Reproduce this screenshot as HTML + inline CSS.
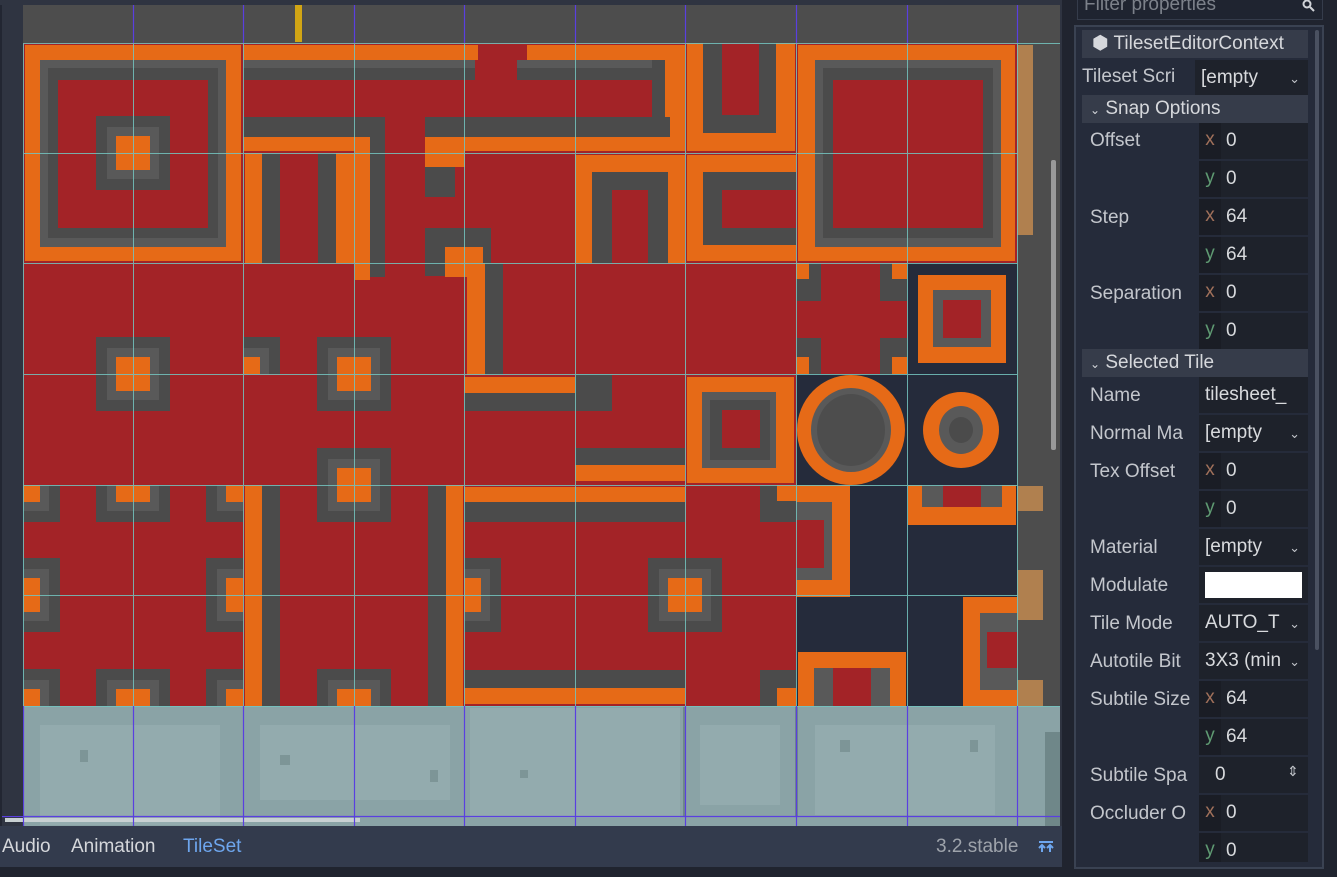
<!DOCTYPE html>
<html><head><meta charset="utf-8"><style>
*{margin:0;padding:0;box-sizing:border-box}
body{width:1337px;height:877px;background:#20242f;overflow:hidden;position:relative;font-family:"Liberation Sans",sans-serif;color:#ccced3}
.a{position:absolute}
.p{font-size:19px;color:#c3c6cc;white-space:nowrap}
.f{position:absolute;background:#1e222b;height:36px;left:1199px;width:109px}
.xy{position:absolute;left:1199px;width:22px;height:36px;background:#1a1d25;font-size:19px;text-align:center;line-height:34px}
.v{position:absolute;font-size:19px;color:#d8dadd;line-height:34px}
.hd{position:absolute;left:1082px;width:226px;background:#363c4a;height:28px;font-size:19px;color:#d6d8dc;line-height:27px}
.dd{position:absolute;right:37px;font-size:13px;color:#c0c3c8}
</style></head><body>
<svg class="a" style="left:0;top:0" width="1062" height="877" viewBox="0 0 1062 877">
<defs>
<g id="k"><rect x="-37" y="-37" width="74" height="74" fill="#4b4b4b"/><rect x="-26" y="-26" width="52" height="52" fill="#595959"/><rect x="-17" y="-17" width="34" height="34" fill="#e66a17"/></g>
</defs>
<rect x="0" y="0" width="1062" height="826" fill="#2f3441"/>
<rect x="23" y="5" width="1037" height="38" fill="#4d4d4d"/>
<rect x="295" y="5" width="7" height="37" fill="#d1a514"/>
<rect x="23" y="43" width="994" height="663" fill="#a32327"/>
<rect x="1017" y="43" width="43" height="663" fill="#4d4d4d"/>
<g fill="#b0804f"><rect x="1017" y="45" width="16" height="190"/><rect x="1017" y="486" width="26" height="25"/><rect x="1017" y="570" width="26" height="50"/><rect x="1017" y="680" width="26" height="26"/></g>
<g fill="#252b3b"><rect x="907" y="263" width="110" height="111"/><rect x="796" y="374" width="221" height="111"/><rect x="850" y="485" width="167" height="221"/><rect x="796" y="595" width="111" height="111"/></g>
<rect x="25" y="45" width="216" height="216" fill="#e66a17"/><rect x="40" y="60" width="186" height="187" fill="#595959"/><rect x="48" y="68" width="170" height="170" fill="#4b4b4b"/><rect x="58" y="80" width="150" height="148" fill="#a32327"/>
<use href="#k" x="133" y="153"/>
<rect x="798" y="45" width="217" height="216" fill="#e66a17"/><rect x="815" y="60" width="186" height="187" fill="#595959"/><rect x="823" y="68" width="170" height="170" fill="#4b4b4b"/><rect x="833" y="80" width="150" height="148" fill="#a32327"/>
<rect x="243" y="45" width="235" height="15" fill="#e66a17"/><rect x="243" y="60" width="255" height="20" fill="#4b4b4b"/><rect x="243" y="60" width="255" height="8" fill="#595959"/>
<rect x="527" y="45" width="158" height="15" fill="#e66a17"/><rect x="517" y="60" width="153" height="20" fill="#4b4b4b"/><rect x="517" y="60" width="153" height="8" fill="#595959"/>
<rect x="665" y="45" width="20" height="106" fill="#e66a17"/><rect x="652" y="60" width="13" height="78" fill="#4b4b4b"/>
<rect x="243" y="117" width="132" height="20" fill="#4b4b4b"/><rect x="243" y="137" width="112" height="14" fill="#e66a17"/>
<rect x="355" y="137" width="15" height="143" fill="#e66a17"/><rect x="370" y="117" width="15" height="160" fill="#4b4b4b"/>
<rect x="425" y="117" width="245" height="20" fill="#4b4b4b"/><rect x="425" y="137" width="260" height="14" fill="#e66a17"/>
<rect x="425" y="137" width="30" height="60" fill="#4b4b4b"/><rect x="425" y="137" width="40" height="30" fill="#e66a17"/>
<rect x="475" y="60" width="40" height="20" fill="#a32327"/>
<rect x="245" y="153" width="17" height="110" fill="#e66a17"/><rect x="262" y="153" width="18" height="110" fill="#4b4b4b"/><rect x="318" y="153" width="18" height="110" fill="#4b4b4b"/><rect x="336" y="153" width="19" height="110" fill="#e66a17"/>
<rect x="425" y="228" width="66" height="48" fill="#4b4b4b"/><rect x="445" y="247" width="38" height="30" fill="#e66a17"/>
<rect x="575" y="155" width="110" height="108" fill="#e66a17"/><rect x="592" y="172" width="76" height="91" fill="#4b4b4b"/><rect x="612" y="190" width="36" height="73" fill="#a32327"/>
<rect x="687" y="155" width="109" height="106" fill="#e66a17"/><rect x="703" y="172" width="93" height="73" fill="#4b4b4b"/><rect x="722" y="190" width="74" height="38" fill="#a32327"/>
<rect x="687" y="43" width="108" height="108" fill="#e66a17"/><rect x="703" y="43" width="73" height="90" fill="#4b4b4b"/><rect x="722" y="43" width="37" height="72" fill="#a32327"/>
<!-- knots -->
<use href="#k" x="133" y="374"/><use href="#k" x="354" y="374"/><use href="#k" x="354" y="485"/>
<svg x="243" y="337" width="37" height="37"><use href="#k" x="0" y="37"/></svg>
<svg x="23" y="485" width="37" height="37"><use href="#k" x="0" y="0"/></svg>
<svg x="96" y="485" width="74" height="37"><use href="#k" x="37" y="0"/></svg>
<svg x="206" y="485" width="37" height="37"><use href="#k" x="37" y="0"/></svg>
<svg x="23" y="558" width="37" height="74"><use href="#k" x="0" y="37"/></svg>
<svg x="206" y="558" width="37" height="74"><use href="#k" x="37" y="37"/></svg>
<svg x="23" y="669" width="37" height="37"><use href="#k" x="0" y="37"/></svg>
<svg x="96" y="669" width="74" height="37"><use href="#k" x="37" y="37"/></svg>
<svg x="206" y="669" width="37" height="37"><use href="#k" x="37" y="37"/></svg>
<svg x="317" y="669" width="74" height="37"><use href="#k" x="37" y="37"/></svg>
<svg x="464" y="558" width="37" height="74"><use href="#k" x="0" y="37"/></svg>
<use href="#k" x="685" y="595"/>
<rect x="467" y="263" width="18" height="112" fill="#e66a17"/><rect x="485" y="263" width="18" height="112" fill="#4b4b4b"/>
<rect x="464" y="377" width="111" height="16" fill="#e66a17"/><rect x="464" y="393" width="111" height="18" fill="#4b4b4b"/><rect x="575" y="374" width="37" height="37" fill="#4b4b4b"/>
<rect x="575" y="448" width="110" height="17" fill="#4b4b4b"/><rect x="575" y="465" width="110" height="16" fill="#e66a17"/>
<rect x="796" y="263" width="111" height="111" fill="#a32327"/>
<g fill="#4b4b4b"><rect x="796" y="263" width="25" height="38"/><rect x="880" y="263" width="27" height="38"/><rect x="796" y="338" width="25" height="36"/><rect x="880" y="338" width="27" height="36"/></g>
<g fill="#e66a17"><rect x="796" y="263" width="13" height="16"/><rect x="892" y="263" width="15" height="16"/><rect x="796" y="357" width="13" height="17"/><rect x="892" y="357" width="15" height="17"/></g>
<rect x="918" y="275" width="88" height="88" fill="#e66a17"/><rect x="933" y="290" width="58" height="57" fill="#595959"/><rect x="943" y="300" width="38" height="38" fill="#a32327"/>
<rect x="687" y="377" width="107" height="106" fill="#e66a17"/><rect x="702" y="392" width="74" height="76" fill="#595959"/><rect x="710" y="400" width="60" height="60" fill="#4b4b4b"/><rect x="722" y="410" width="38" height="38" fill="#a32327"/>
<ellipse cx="851" cy="430" rx="54" ry="55" fill="#e66a17"/><ellipse cx="851" cy="430" rx="40" ry="42" fill="#595959"/><ellipse cx="851" cy="430" rx="34" ry="36" fill="#4d4d4d"/>
<ellipse cx="961" cy="430" rx="38" ry="38" fill="#e66a17"/><ellipse cx="961" cy="430" rx="22" ry="24" fill="#595959"/><ellipse cx="961" cy="430" rx="12" ry="13" fill="#4b4b4b"/>
<rect x="245" y="485" width="17" height="221" fill="#e66a17"/><rect x="262" y="485" width="18" height="221" fill="#4b4b4b"/>
<rect x="428" y="485" width="18" height="221" fill="#4b4b4b"/><rect x="446" y="485" width="17" height="221" fill="#e66a17"/>
<rect x="464" y="487" width="221" height="15" fill="#e66a17"/><rect x="464" y="502" width="221" height="20" fill="#4b4b4b"/>
<rect x="464" y="670" width="221" height="18" fill="#4b4b4b"/><rect x="464" y="688" width="221" height="16" fill="#e66a17"/>
<rect x="760" y="485" width="36" height="37" fill="#4b4b4b"/><rect x="777" y="485" width="19" height="16" fill="#e66a17"/>
<rect x="760" y="670" width="36" height="36" fill="#4b4b4b"/><rect x="777" y="688" width="19" height="18" fill="#e66a17"/>
<rect x="796" y="485" width="54" height="112" fill="#e66a17"/><rect x="796" y="502" width="36" height="78" fill="#595959"/><rect x="796" y="520" width="28" height="48" fill="#a32327"/>
<rect x="908" y="485" width="108" height="40" fill="#e66a17"/><rect x="922" y="485" width="80" height="22" fill="#595959"/><rect x="943" y="485" width="38" height="22" fill="#a32327"/>
<rect x="798" y="652" width="108" height="54" fill="#e66a17"/><rect x="814" y="668" width="76" height="38" fill="#595959"/><rect x="833" y="668" width="38" height="38" fill="#a32327"/>
<rect x="963" y="597" width="54" height="109" fill="#e66a17"/><rect x="980" y="613" width="37" height="77" fill="#595959"/><rect x="987" y="632" width="30" height="36" fill="#a32327"/>
<rect x="23" y="706" width="1037" height="120" fill="#8aa3a6"/>
<g fill="#93abae"><rect x="40" y="725" width="180" height="100"/><rect x="260" y="725" width="190" height="75"/><rect x="470" y="708" width="210" height="110"/><rect x="700" y="725" width="80" height="80"/><rect x="815" y="725" width="180" height="90"/></g>
<g fill="#7d9597"><rect x="80" y="750" width="8" height="12"/><rect x="280" y="755" width="10" height="10"/><rect x="430" y="770" width="8" height="12"/><rect x="520" y="770" width="8" height="8"/><rect x="840" y="740" width="10" height="12"/><rect x="970" y="740" width="8" height="12"/></g>
<g fill="#6f8789"><rect x="683" y="706" width="3" height="110"/><rect x="795" y="706" width="3" height="110"/><rect x="1045" y="732" width="15" height="94"/></g>
<rect x="5" y="818" width="355" height="4" fill="#c8d0d2"/>
<g stroke="#74c5c0" stroke-width="1" opacity="0.85">
<line x1="133.5" y1="43" x2="133.5" y2="706"/><line x1="243.5" y1="43" x2="243.5" y2="706"/><line x1="354.5" y1="43" x2="354.5" y2="706"/><line x1="464.5" y1="43" x2="464.5" y2="706"/><line x1="575.5" y1="43" x2="575.5" y2="706"/><line x1="685.5" y1="43" x2="685.5" y2="706"/><line x1="796.5" y1="43" x2="796.5" y2="706"/><line x1="907.5" y1="43" x2="907.5" y2="706"/><line x1="1017.5" y1="43" x2="1017.5" y2="706"/><line x1="23.5" y1="43" x2="23.5" y2="706"/>
<line x1="23" y1="43.5" x2="1060" y2="43.5"/><line x1="23" y1="153.5" x2="1017" y2="153.5"/><line x1="23" y1="263.5" x2="1017" y2="263.5"/><line x1="23" y1="374.5" x2="1017" y2="374.5"/><line x1="23" y1="485.5" x2="1017" y2="485.5"/><line x1="23" y1="595.5" x2="1017" y2="595.5"/><line x1="23" y1="706.5" x2="1060" y2="706.5"/>
</g>
<g stroke="#5a3fe0" stroke-width="1.2">
<line x1="133.5" y1="5" x2="133.5" y2="43"/><line x1="243.5" y1="5" x2="243.5" y2="43"/><line x1="354.5" y1="5" x2="354.5" y2="43"/><line x1="464.5" y1="5" x2="464.5" y2="43"/><line x1="575.5" y1="5" x2="575.5" y2="43"/><line x1="685.5" y1="5" x2="685.5" y2="43"/><line x1="796.5" y1="5" x2="796.5" y2="43"/><line x1="907.5" y1="5" x2="907.5" y2="43"/><line x1="1017.5" y1="5" x2="1017.5" y2="43"/>
<line x1="23.5" y1="706" x2="23.5" y2="826"/><line x1="133.5" y1="706" x2="133.5" y2="826"/><line x1="243.5" y1="706" x2="243.5" y2="826"/><line x1="354.5" y1="706" x2="354.5" y2="826"/><line x1="464.5" y1="706" x2="464.5" y2="826"/><line x1="575.5" y1="706" x2="575.5" y2="826"/><line x1="685.5" y1="706" x2="685.5" y2="826"/><line x1="796.5" y1="706" x2="796.5" y2="826"/><line x1="907.5" y1="706" x2="907.5" y2="826"/><line x1="1017.5" y1="706" x2="1017.5" y2="826"/>
<line x1="0" y1="816.5" x2="1060" y2="816.5"/>
</g>
<rect x="0" y="0" width="23" height="816" fill="#2f3441"/><rect x="0" y="0" width="2" height="826" fill="#222632"/>
<rect x="0" y="0" width="1062" height="5" fill="#2f3441"/>
<rect x="1060" y="0" width="2" height="826" fill="#2f3441"/>
<rect x="1051" y="160" width="5" height="290" rx="2" fill="#9a9a9a"/>
<rect x="0" y="826" width="1062" height="41" fill="#333b4d"/>
<rect x="0" y="867" width="1062" height="10" fill="#20242f"/>
<g stroke="#6ea6ee" stroke-width="2" fill="none"><line x1="1039" y1="842" x2="1053" y2="842"/><path d="M1042 852 v-7 M1050 852 v-7 M1039 848 l3-3 3 3 M1047 848 l3-3 3 3"/></g>
</svg>
<div class="a p" style="left:2px;top:836px;color:#d5d7db">Audio</div>
<div class="a p" style="left:71px;top:836px;color:#d5d7db">Animation</div>
<div class="a p" style="left:183px;top:836px;color:#6ea6ee">TileSet</div>
<div class="a p" style="left:936px;top:836px;color:#9ea3ab">3.2.stable</div>

<div class="a" style="left:1074px;top:25px;width:250px;height:844px;background:#252b3a;border:2px solid #3a4252"></div>
<div class="a" style="left:1077px;top:-5px;width:246px;height:25px;background:#1f2430;border:1px solid #353c4b"></div>
<div class="a p" style="left:1084px;top:-6px;color:#7c818a">Filter properties</div>
<svg class="a" style="left:1302px;top:0" width="14" height="12"><circle cx="5" cy="4" r="3.5" fill="none" stroke="#d0d3d8" stroke-width="2"/><line x1="8" y1="7" x2="12" y2="11" stroke="#d0d3d8" stroke-width="2"/></svg>
<div class="a" style="left:1315px;top:30px;width:4px;height:620px;background:#4a5161;border-radius:2px"></div>

<div class="hd" style="top:30px;padding-left:10px">⬢ TilesetEditorContext</div>
<div class="a p" style="left:1082px;top:66px">Tileset Scri</div>
<div class="f" style="top:60px;left:1195px;width:113px"></div><div class="v" style="left:1201px;top:61px">[empty</div><div class="dd" style="top:71px">⌄</div>
<div class="hd" style="top:95px;padding-left:8px"><span style="font-size:12px">⌄</span> Snap Options</div>

<div class="a p" style="left:1090px;top:130px">Offset</div>
<div class="f" style="top:123px"></div><div class="xy" style="top:123px;color:#a0705a">x</div><div class="v" style="left:1226px;top:124px">0</div>
<div class="f" style="top:161px"></div><div class="xy" style="top:161px;color:#5f9a72">y</div><div class="v" style="left:1226px;top:162px">0</div>
<div class="a p" style="left:1090px;top:207px">Step</div>
<div class="f" style="top:199px"></div><div class="xy" style="top:199px;color:#a0705a">x</div><div class="v" style="left:1226px;top:200px">64</div>
<div class="f" style="top:237px"></div><div class="xy" style="top:237px;color:#5f9a72">y</div><div class="v" style="left:1226px;top:238px">64</div>
<div class="a p" style="left:1090px;top:283px">Separation</div>
<div class="f" style="top:275px"></div><div class="xy" style="top:275px;color:#a0705a">x</div><div class="v" style="left:1226px;top:276px">0</div>
<div class="f" style="top:313px"></div><div class="xy" style="top:313px;color:#5f9a72">y</div><div class="v" style="left:1226px;top:314px">0</div>
<div class="hd" style="top:349px;padding-left:8px"><span style="font-size:12px">⌄</span> Selected Tile</div>
<div class="a p" style="left:1090px;top:385px">Name</div>
<div class="f" style="top:377px"></div><div class="v" style="left:1205px;top:378px">tilesheet_</div>
<div class="a p" style="left:1090px;top:423px">Normal Ma</div>
<div class="f" style="top:415px"></div><div class="v" style="left:1205px;top:416px">[empty</div><div class="dd" style="top:426px">⌄</div>
<div class="a p" style="left:1090px;top:461px">Tex Offset</div>
<div class="f" style="top:453px"></div><div class="xy" style="top:453px;color:#a0705a">x</div><div class="v" style="left:1226px;top:454px">0</div>
<div class="f" style="top:491px"></div><div class="xy" style="top:491px;color:#5f9a72">y</div><div class="v" style="left:1226px;top:492px">0</div>
<div class="a p" style="left:1090px;top:537px">Material</div>
<div class="f" style="top:529px"></div><div class="v" style="left:1205px;top:530px">[empty</div><div class="dd" style="top:540px">⌄</div>
<div class="a p" style="left:1090px;top:575px">Modulate</div>
<div class="f" style="top:567px"></div><div class="a" style="left:1205px;top:572px;width:97px;height:26px;background:#fff"></div>
<div class="a p" style="left:1090px;top:613px">Tile Mode</div>
<div class="f" style="top:605px"></div><div class="v" style="left:1205px;top:606px">AUTO_T</div><div class="dd" style="top:616px">⌄</div>
<div class="a p" style="left:1090px;top:651px">Autotile Bit</div>
<div class="f" style="top:643px"></div><div class="v" style="left:1205px;top:644px">3X3 (min</div><div class="dd" style="top:654px">⌄</div>
<div class="a p" style="left:1090px;top:689px">Subtile Size</div>
<div class="f" style="top:681px"></div><div class="xy" style="top:681px;color:#a0705a">x</div><div class="v" style="left:1226px;top:682px">64</div>
<div class="f" style="top:719px"></div><div class="xy" style="top:719px;color:#5f9a72">y</div><div class="v" style="left:1226px;top:720px">64</div>
<div class="a p" style="left:1090px;top:765px">Subtile Spa</div>
<div class="f" style="top:757px"></div><div class="v" style="left:1215px;top:758px">0</div><div class="a" style="left:1287px;top:763px;font-size:14px;color:#c0c3c8">⇕</div>
<div class="a p" style="left:1090px;top:803px">Occluder O</div>
<div class="f" style="top:795px"></div><div class="xy" style="top:795px;color:#a0705a">x</div><div class="v" style="left:1226px;top:796px">0</div>
<div class="f" style="top:833px;height:29px"></div><div class="xy" style="top:833px;height:29px;color:#5f9a72">y</div><div class="v" style="left:1226px;top:834px">0</div>
</body></html>
